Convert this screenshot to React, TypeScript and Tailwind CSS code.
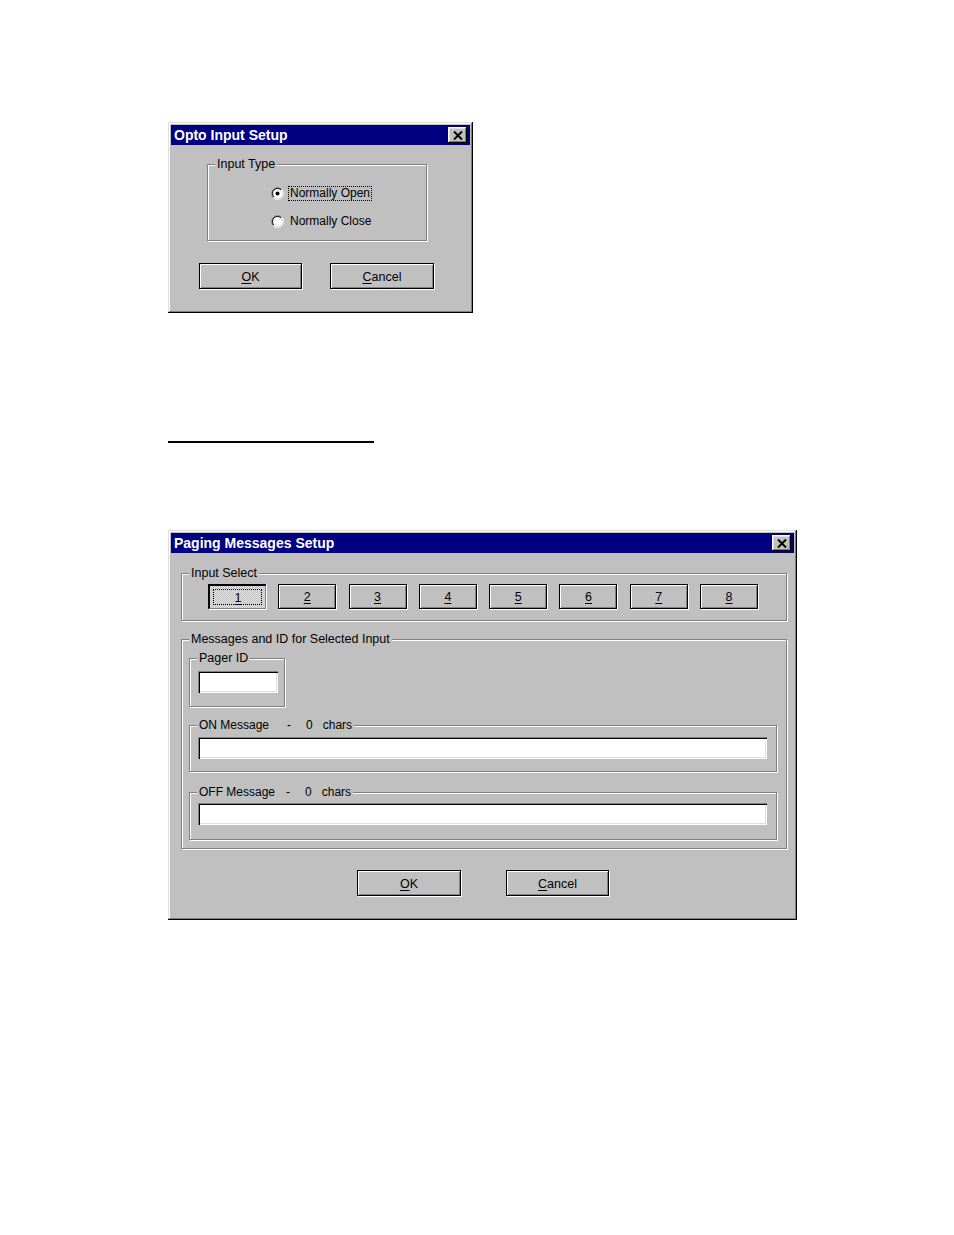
import React from 'react';

const FONT = "font-['Liberation_Sans',Arial,sans-serif]";

const CloseButton: React.FC = () => (
  <div className="flex h-[16px] w-[19px] items-center justify-center bg-[#c0c0c0] shadow-[inset_-1px_-1px_#000,inset_1px_1px_#fff,inset_-2px_-2px_#808080,inset_2px_2px_#dfdfdf]">
    <svg width="10" height="9" viewBox="0 0 10 9">
      <path d="M1 0.5 L9 8.5 M9 0.5 L1 8.5" stroke="#000" strokeWidth="2" />
    </svg>
  </div>
);

const Window: React.FC<{ title: string; className: string; children: React.ReactNode }> = ({
  title,
  className,
  children,
}) => (
  <div
    className={`bg-[#c0c0c0] p-[3px] shadow-[inset_-1px_-1px_#000,inset_1px_1px_#dfdfdf,inset_-2px_-2px_#808080,inset_2px_2px_#fff] ${className}`}
  >
    <div className="flex h-[20px] items-center justify-between bg-[#000080] px-[3px]">
      <span className="text-[14px] font-bold leading-none text-white">{title}</span>
      <CloseButton />
    </div>
    {children}
  </div>
);

const Group: React.FC<{ label: React.ReactNode; className?: string; children: React.ReactNode }> = ({
  label,
  className = '',
  children,
}) => (
  <fieldset className={`border border-[#808080] shadow-[inset_1px_1px_#fff,1px_1px_#fff] ${className}`}>
    <legend className="ml-[7px] bg-[#c0c0c0] px-[2px] text-[12.5px] leading-[14px]">{label}</legend>
    {children}
  </fieldset>
);

const Button: React.FC<{ accel: string; rest?: string; className: string }> = ({ accel, rest = '', className }) => (
  <div
    className={`flex items-center justify-center border border-black bg-[#c0c0c0] pt-[2px] text-[12.5px] shadow-[inset_1px_1px_#fff,inset_-1px_-1px_#808080,1px_1px_#fff] ${className}`}
  >
    <span>
      <span className="underline underline-offset-[2px]">{accel}</span>
      {rest}
    </span>
  </div>
);

const PressedButton: React.FC<{ accel: string }> = ({ accel }) => (
  <div className="relative flex h-[25px] w-[58px] items-center justify-center border-t-2 border-l-2 border-r border-b border-t-black border-l-black border-r-[#808080] border-b-[#808080] bg-[repeating-conic-gradient(#e4e4e4_0%_25%,#c0c0c0_0%_50%)] bg-[length:2px_2px] pt-[2px] pl-[1px] text-[12.5px] shadow-[1px_1px_#fff]">
    <span className="underline underline-offset-[2px]">{accel}</span>
    <div className="absolute inset-[3px] border border-dotted border-black" />
  </div>
);

const Radio: React.FC<{ checked?: boolean }> = ({ checked }) => (
  <svg width="13" height="13" viewBox="0 0 13 13">
    <circle cx="6.5" cy="6.5" r="5" fill="#fff" />
    <path d="M2.26 10.74 A6 6 0 0 1 10.74 2.26" stroke="#808080" fill="none" />
    <path d="M10.74 2.26 A6 6 0 0 1 2.26 10.74" stroke="#fff" fill="none" />
    <path d="M2.96 10.04 A5 5 0 0 1 10.04 2.96" stroke="#000" fill="none" />
    <path d="M10.04 2.96 A5 5 0 0 1 2.96 10.04" stroke="#dfdfdf" fill="none" />
    {checked && <circle cx="6.5" cy="6.5" r="2" fill="#000" />}
  </svg>
);

const Field: React.FC<{ className: string }> = ({ className }) => (
  <div
    className={`h-[22px] bg-white shadow-[inset_1px_1px_#808080,inset_2px_2px_#000,inset_-1px_-1px_#fff,inset_-2px_-2px_#dfdfdf] ${className}`}
  />
);

const OptoDialog: React.FC = () => (
  <Window title="Opto Input Setup" className="h-[191px] w-[305px]">
    <div className="pl-[36px] pt-[12px]">
      <Group label="Input Type" className="w-[220px]">
        <div className="flex flex-col gap-[13px] pl-[63px] pt-[15px] pb-[11px] text-[12px]">
          <div className="flex h-[15px] items-center gap-[4px]">
            <Radio checked />
            <span className="border border-dotted border-black px-[1px] leading-[13px]">Normally Open</span>
          </div>
          <div className="flex h-[15px] items-center gap-[4px]">
            <Radio />
            <span className="border border-transparent px-[1px] leading-[13px]">Normally Close</span>
          </div>
        </div>
      </Group>
    </div>
    <div className="flex gap-[28px] pl-[28px] pt-[22px]">
      <Button accel="O" rest="K" className="h-[26px] w-[103px]" />
      <Button accel="C" rest="ancel" className="h-[26px] w-[104px]" />
    </div>
  </Window>
);

const MessageLabel: React.FC<{ name: string; dashGap: string }> = ({ name, dashGap }) => (
  <span className="text-[12px]">
    {name}
    <span className={dashGap}>-</span>
    <span className="ml-[15px]">0</span>
    <span className="ml-[10px]">chars</span>
  </span>
);

const PagingDialog: React.FC = () => (
  <Window title="Paging Messages Setup" className="h-[390px] w-[629px]">
    <div className="pl-[10px] pt-[13px]">
      <Group label="Input Select" className="w-[606px]">
        <div className="flex gap-[12.3px] pl-[26px] pt-[4px] pb-[11px]">
          <PressedButton accel="1" />
          {['2', '3', '4', '5', '6', '7', '8'].map((n) => (
            <Button key={n} accel={n} className="h-[25px] w-[58px]" />
          ))}
        </div>
      </Group>

      <Group label="Messages and ID for Selected Input" className="mt-[11px] w-[606px]">
        <div className="flex flex-col items-start pl-[7px] pt-[5px] pb-[8px]">
          <Group label="Pager ID" className="w-[96px]">
            <div className="pl-[8px] pt-[6px] pb-[13px]">
              <Field className="w-[80px]" />
            </div>
          </Group>
          <Group label={<MessageLabel name="ON Message" dashGap="ml-[18px]" />} className="mt-[11px] w-[588px]">
            <div className="pl-[8px] pt-[5px] pb-[12px]">
              <Field className="w-[569px]" />
            </div>
          </Group>
          <Group label={<MessageLabel name="OFF Message" dashGap="ml-[11px]" />} className="mt-[13px] w-[588px]">
            <div className="pl-[8px] pt-[4px] pb-[14px]">
              <Field className="w-[569px]" />
            </div>
          </Group>
        </div>
      </Group>
    </div>
    <div className="flex gap-[45px] pl-[186px] pt-[21px]">
      <Button accel="O" rest="K" className="h-[26px] w-[104px]" />
      <Button accel="C" rest="ancel" className="h-[26px] w-[103px]" />
    </div>
  </Window>
);

export default function App() {
  return (
    <div className={`min-h-[1235px] w-full bg-white pl-[168px] pt-[122px] text-black ${FONT}`}>
      <OptoDialog />
      <div className="mt-[128px] h-[2px] w-[206px] bg-black" />
      <div className="mt-[87px]">
        <PagingDialog />
      </div>
    </div>
  );
}
